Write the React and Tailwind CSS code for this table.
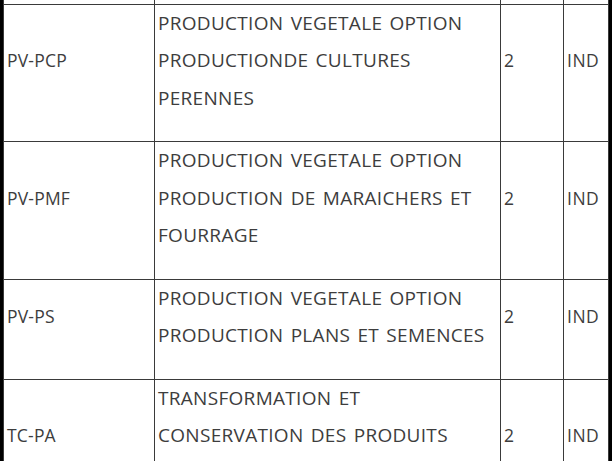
import React from "react";

const rows = [
    { code: "PV-PCP", lines: ["PRODUCTION VEGETALE OPTION", "PRODUCTIONDE CULTURES", "PERENNES"], credits: "2", type: "IND" },
    { code: "PV-PMF", lines: ["PRODUCTION VEGETALE OPTION", "PRODUCTION DE MARAICHERS ET", "FOURRAGE"], credits: "2", type: "IND" },
    { code: "PV-PS", lines: ["PRODUCTION VEGETALE OPTION", "PRODUCTION PLANS ET SEMENCES"], credits: "2", type: "IND" },
    { code: "TC-PA", lines: ["TRANSFORMATION ET", "CONSERVATION DES PRODUITS", "AGRICOLES"], credits: "2", type: "IND" },
];

const cell = "border border-[#3a3a3a] align-middle pl-[3px] pr-[2px] py-0";

export default function App() {
    return (
        <div className="w-[612px] h-[461px] overflow-hidden bg-white">
            <div className="border-l-[3px] border-r-[4px] border-black w-[612px]">
                <table
                    className="w-[605px] border-collapse table-fixed text-[#3d3d3d] text-[17.5px]"
                    style={{ fontFamily: '"Open Sans", "Liberation Sans", sans-serif' }}
                >
                    <colgroup>
                        <col className="w-[151px]" />
                        <col className="w-[346px]" />
                        <col className="w-[63px]" />
                        <col className="w-[45px]" />
                    </colgroup>
                    <tbody>
                        <tr className="h-[4px]">
                            <td className="border-x border-b border-[#3a3a3a] p-0"></td>
                            <td className="border-x border-b border-[#3a3a3a] p-0"></td>
                            <td className="border-x border-b border-[#3a3a3a] p-0"></td>
                            <td className="border-x border-b border-[#3a3a3a] p-0"></td>
                        </tr>
                        {rows.map((row) => (
                            <tr key={row.code}>
                                <td className={cell}>
                                    <p className="leading-[37.5px] mb-[24px] whitespace-nowrap tracking-[0.2px]">{row.code}</p>
                                </td>
                                <td className={cell}>
                                    <p className="leading-[37.5px] mb-[24px] text-[19px] tracking-[0.3px] [word-spacing:2px]">
                                        {row.lines.map((l) => (
                                            <span key={l} className="block whitespace-nowrap">{l}</span>
                                        ))}
                                    </p>
                                </td>
                                <td className={cell}>
                                    <p className="leading-[37.5px] mb-[24px]">{row.credits}</p>
                                </td>
                                <td className={cell}>
                                    <p className="leading-[37.5px] mb-[24px] tracking-[0.5px]">{row.type}</p>
                                </td>
                            </tr>
                        ))}
                    </tbody>
                </table>
            </div>
        </div>
    );
}
